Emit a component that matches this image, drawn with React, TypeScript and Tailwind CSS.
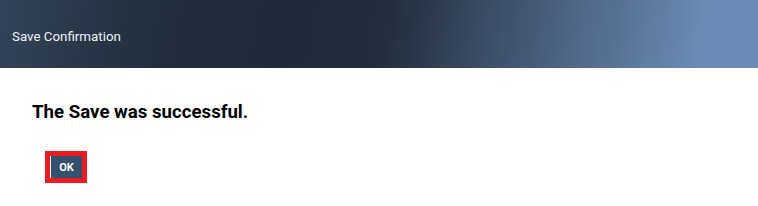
export default function App() {
  return (
    <div className="w-[758px] h-[206px] bg-white font-['Roboto','Liberation_Sans',sans-serif]">
      <div className="h-[68px] flex items-center px-3 pt-[5px] bg-[linear-gradient(100deg,#334358_0%,#222d3c_22%,#1f2937_38%,#222c3a_50%,#4a5f7e_72%,#6a8bb5_92%,#6a8bb5_100%)]">
        <span className="text-[13.33px] text-[#eef2f6]">Save Confirmation</span>
      </div>
      <div className="pl-8 pt-[32px]">
        <h1 className="text-[18.67px] font-bold text-black leading-[24px]">The Save was successful.</h1>
        <div className="mt-[27px] ml-[13px] w-[42px] h-[32px] border-[5px] border-[#ec1c24] flex items-center">
          <button className="h-[22px] w-[32px] border-l border-white bg-[#34516f] text-white text-[11px] font-bold leading-none">
            OK
          </button>
        </div>
      </div>
    </div>
  )
}
